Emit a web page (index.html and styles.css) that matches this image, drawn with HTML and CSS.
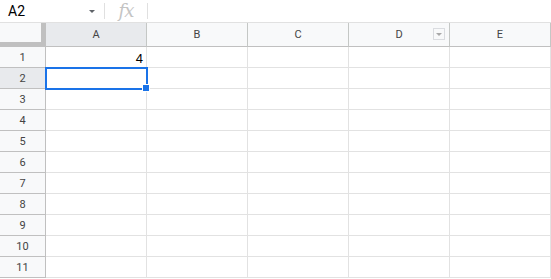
FILE: index.html
```html
<!DOCTYPE html>
<html lang="en">
<head>
  <meta charset="UTF-8">
  <meta name="viewport" content="width=device-width, initial-scale=1.0">
  <title>Sheet</title>
  <link rel="stylesheet" href="styles.css">
</head>
<body>
  <div class="formula-bar">
    <div class="name-box">
      <span class="cell-ref">A2</span>
      <span class="caret"></span>
    </div>
    <div class="divider"></div>
    <div class="fx">fx</div>
    <div class="divider"></div>
    <div class="formula-input"></div>
  </div>

  <div class="grid" id="grid"></div>

  <script>
    const columns = ['A', 'B', 'C', 'D', 'E'];
    const values = { A1: '4' };
    const grid = document.getElementById('grid');

    const corner = document.createElement('div');
    corner.className = 'corner';
    grid.appendChild(corner);

    columns.forEach(function (col) {
      const head = document.createElement('div');
      head.className = 'col-head' + (col === 'A' ? ' active' : '');
      head.textContent = col;
      if (col === 'D') {
        const filter = document.createElement('span');
        filter.className = 'filter-btn';
        head.appendChild(filter);
      }
      grid.appendChild(head);
    });

    for (let row = 1; row <= 11; row++) {
      const rowHead = document.createElement('div');
      rowHead.className = 'row-head' + (row === 2 ? ' active' : '');
      rowHead.textContent = row;
      grid.appendChild(rowHead);

      columns.forEach(function (col) {
        const cell = document.createElement('div');
        const id = col + row;
        cell.className = 'cell' + (id === 'A2' ? ' selected' : '');
        cell.textContent = values[id] || '';
        if (id === 'A2') {
          const handle = document.createElement('span');
          handle.className = 'handle';
          cell.appendChild(handle);
        }
        grid.appendChild(cell);
      });
    }
  </script>
</body>
</html>
```

FILE: styles.css
```css
body {
  margin: 0;
  font-family: Roboto, Arial, sans-serif;
  background-color: #fff;
  overflow: hidden;
}

.formula-bar {
  display: flex;
  align-items: center;
  height: 22px;
  border-bottom: 1px solid #e1e1e1;
}

.name-box {
  display: flex;
  align-items: center;
  justify-content: space-between;
  width: 87px;
  padding: 0 9px 0 8px;
}

.cell-ref {
  font-size: 14px;
  color: #000;
}

.caret {
  width: 0;
  height: 0;
  border-left: 3px solid transparent;
  border-right: 3px solid transparent;
  border-top: 3px solid #5f6368;
  margin-top: 1px;
}

.divider {
  width: 1px;
  height: 16px;
  background-color: #e0e0e0;
}

.fx {
  width: 42px;
  text-align: center;
  font-family: "DejaVu Serif", serif;
  font-style: italic;
  font-size: 18px;
  color: #c4c4c4;
  line-height: 22px;
  letter-spacing: -1px;
}

.formula-input {
  flex: 1;
}

.grid {
  display: grid;
  grid-template-columns: 46px repeat(5, 101px);
  grid-template-rows: 24px repeat(11, 21px);
}

.corner {
  background-color: #f8f9fa;
  border-right: 5px solid #c0c0c0;
  border-bottom: 5px solid #c0c0c0;
  box-sizing: border-box;
}

.col-head {
  position: relative;
  display: flex;
  align-items: center;
  justify-content: center;
  background-color: #f8f9fa;
  border-right: 1px solid #c4c7c5;
  border-bottom: 1px solid #c0c0c0;
  font-size: 11px;
  color: #444;
  box-sizing: border-box;
}

.col-head.active {
  background-color: #e8eaed;
}

.filter-btn {
  position: absolute;
  right: 4px;
  top: 5px;
  width: 12px;
  height: 12px;
  border: 1px solid #dadce0;
  box-sizing: border-box;
}

.filter-btn::after {
  content: "";
  position: absolute;
  left: 2px;
  top: 4px;
  border-left: 3px solid transparent;
  border-right: 3px solid transparent;
  border-top: 3px solid #a8a8a8;
}

.row-head {
  display: flex;
  align-items: center;
  justify-content: center;
  background-color: #f8f9fa;
  border-right: 1px solid #c0c0c0;
  border-bottom: 1px solid #c0c0c0;
  font-size: 11px;
  color: #444;
  box-sizing: border-box;
}

.row-head.active {
  background-color: #e8eaed;
}

.cell {
  position: relative;
  border-right: 1px solid #e2e2e2;
  border-bottom: 1px solid #e2e2e2;
  box-sizing: border-box;
  font-family: Arial, "Liberation Sans", sans-serif;
  font-size: 13px;
  color: #000;
  text-align: right;
  padding: 4px 3px 0 0;
}

.cell.selected {
  outline: 2px solid #1a73e8;
  outline-offset: -1px;
  z-index: 1;
}

.handle {
  position: absolute;
  right: -4px;
  bottom: -4px;
  width: 6px;
  height: 6px;
  background-color: #1a73e8;
  border: 1px solid #fff;
}
```
